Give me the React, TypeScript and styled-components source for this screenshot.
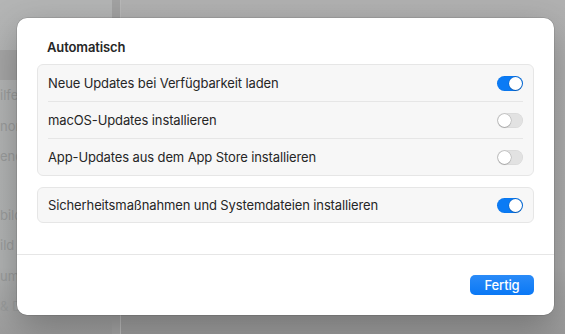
import React from 'react';
import styled, {createGlobalStyle} from 'styled-components';

const GlobalStyle = createGlobalStyle`
	html, body {
		margin: 0;
		padding: 0;
		width: 565px;
		height: 334px;
		overflow: hidden;
		background: #acacac;
	}
	* {
		box-sizing: border-box;
	}
`;

const Backdrop = styled.div`
	position: relative;
	width: 565px;
	height: 334px;
	display: flex;
	font-family: Inter, "Liberation Sans", sans-serif;
	background: linear-gradient(to bottom, #b1b1b1 0%, #adadad 80%, #9a9a9a 100%);
`;

const Sidebar = styled.div`
	width: 112px;
	display: flex;
	flex-direction: column;
	padding-top: 50px;
	background: linear-gradient(to bottom, #b4b5b5 0%, #b1b3b3 80%, #9d9d9d 100%);
`;

const SidebarItem = styled.div<{$selected?: boolean}>`
	height: ${p => (p.$selected ? 30 : 30.5)}px;
	display: flex;
	align-items: center;
	font-size: 13px;
	color: #9a9c9c;
	white-space: nowrap;
	background: ${p => (p.$selected ? '#a6a6a6' : 'transparent')};
`;

const Gap = styled.div<{$h: number}>`
	height: ${p => p.$h}px;
`;

const Divider = styled.div`
	width: 9px;
	background: #a2a2a2;
	border-right: 1px solid #b9b9b9;
`;

const Content = styled.div`
	flex: 1;
`;

const Dialog = styled.div`
	position: absolute;
	left: 17px;
	top: 18px;
	width: 537px;
	height: 297px;
	background: #ffffff;
	border-radius: 10px;
	box-shadow: 0 0 0 0.5px rgba(0, 0, 0, 0.18), 0 12px 36px rgba(0, 0, 0, 0.28);
	display: flex;
	flex-direction: column;
	overflow: hidden;
	letter-spacing: -0.12px;
`;

const Body = styled.div`
	flex: 1;
	padding: 21px 20px 0 20px;
	display: flex;
	flex-direction: column;
`;

const Title = styled.div`
	font-size: 13px;
	font-weight: 600;
	line-height: 16px;
	color: #262626;
	padding-left: 10px;
	margin-bottom: 9px;
`;

const Group = styled.div`
	background: #f7f7f7;
	border: 1px solid #e6e6e6;
	border-radius: 6px;
	padding: 0 10px;
	margin-bottom: 11px;
`;

const Row = styled.div<{$h: number; $last?: boolean}>`
	height: ${p => p.$h}px;
	display: flex;
	align-items: center;
	justify-content: space-between;
	border-bottom: ${p => (p.$last ? 'none' : '1px solid #e6e6e6')};
`;

const Label = styled.span`
	font-size: 13px;
	color: #262626;
`;

const Toggle = styled.div<{$on: boolean}>`
	width: 26px;
	height: 15px;
	border-radius: 8px;
	background: ${p => (p.$on ? '#0b7bf5' : '#e2e2e2')};
	display: flex;
	align-items: center;
	justify-content: ${p => (p.$on ? 'flex-end' : 'flex-start')};
	padding: 0 1px;
	box-shadow: inset 0 0 0 0.5px rgba(0, 0, 0, 0.06);
`;

const Knob = styled.div`
	width: 13px;
	height: 13px;
	border-radius: 50%;
	background: #ffffff;
	box-shadow: 0 0 0 0.5px rgba(0, 0, 0, 0.2), 0 1px 1px rgba(0, 0, 0, 0.15);
`;

const Footer = styled.div`
	height: 61px;
	border-top: 1px solid #e6e6e6;
	display: flex;
	justify-content: flex-end;
	align-items: flex-start;
	padding: 20px 20px 0 0;
`;

const Button = styled.button`
	width: 64px;
	height: 20px;
	border: none;
	border-radius: 5px;
	background: linear-gradient(to bottom, #2a8bf8, #0a78f5);
	color: #ffffff;
	font-family: Inter, "Liberation Sans", sans-serif;
	font-size: 13px;
	font-weight: 500;
	line-height: 20px;
	letter-spacing: -0.12px;
	padding: 0;
`;

const Switch = ({on}: {on: boolean}) => (
	<Toggle $on={on}>
		<Knob />
	</Toggle>
);

const sidebar = [
	{t: 'ilfen', gap: 0},
	{t: 'nor', gap: 0},
	{t: 'end', gap: 0},
	{t: 'bild', gap: 28},
	{t: 'ild', gap: 0},
	{t: 'um', gap: 0},
	{t: '& D', gap: 0},
];

export default function App() {
	return (
		<>
			<GlobalStyle />
			<Backdrop>
				<Sidebar>
					<SidebarItem $selected />
					{sidebar.map(s => (
						<React.Fragment key={s.t}>
							{s.gap > 0 && <Gap $h={s.gap} />}
							<SidebarItem>{s.t}</SidebarItem>
						</React.Fragment>
					))}
				</Sidebar>
				<Divider />
				<Content />
				<Dialog>
					<Body>
						<Title>Automatisch</Title>
						<Group>
							<Row $h={37}>
								<Label>Neue Updates bei Verfügbarkeit laden</Label>
								<Switch on />
							</Row>
							<Row $h={37}>
								<Label>macOS-Updates installieren</Label>
								<Switch on={false} />
							</Row>
							<Row $h={36} $last>
								<Label>App-Updates aus dem App Store installieren</Label>
								<Switch on={false} />
							</Row>
						</Group>
						<Group>
							<Row $h={34} $last>
								<Label>Sicherheitsmaßnahmen und Systemdateien installieren</Label>
								<Switch on />
							</Row>
						</Group>
					</Body>
					<Footer>
						<Button>Fertig</Button>
					</Footer>
				</Dialog>
			</Backdrop>
		</>
	);
}
